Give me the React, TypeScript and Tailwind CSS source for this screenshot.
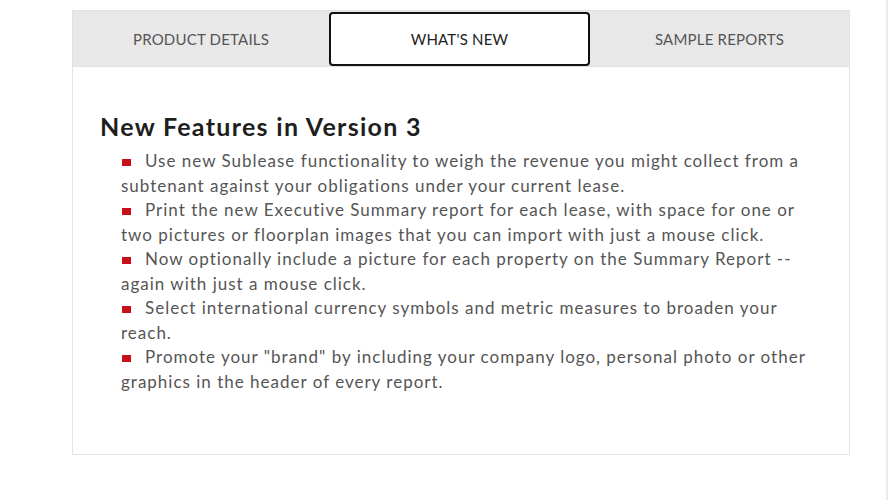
import React from "react";

const items = [
  "Use new Sublease functionality to weigh the revenue you might collect from a subtenant against your obligations under your current lease.",
  "Print the new Executive Summary report for each lease, with space for one or two pictures or floorplan images that you can import with just a mouse click.",
  "Now optionally include a picture for each property on the Summary Report -- again with just a mouse click.",
  "Select international currency symbols and metric measures to broaden your reach.",
  'Promote your "brand" by including your company logo, personal photo or other graphics in the header of every report.',
];

export default function App() {
  return (
    <div
      className="relative w-[890px] h-[500px] bg-white overflow-hidden"
      style={{ fontFamily: "Lato, 'Open Sans', sans-serif" }}
    >
      <div className="absolute right-[2px] top-0 h-full w-[2px] bg-[#ebebeb]" />
      <div className="ml-[72px] mt-[10px] w-[778px] h-[445px] border border-[#e2e2e2] bg-white">
        <div className="flex h-[56px] bg-[#e8e8e8] border-b border-[#e2e2e2]">
          <div className="w-[256px] pt-[1px] flex items-center justify-center text-[15px] text-[#555] tracking-[0.2px]">
            PRODUCT DETAILS
          </div>
          <div className="w-[261px] mt-[1px] flex items-center justify-center bg-white border-2 border-[#111] rounded-[4px] text-[15px] text-[#222] tracking-[0.2px]">
            WHAT'S NEW
          </div>
          <div className="flex-1 pt-[1px] flex items-center justify-center text-[15px] text-[#555] tracking-[0.2px]">
            SAMPLE REPORTS
          </div>
        </div>
        <div className="pl-[27px] pt-[44px]">
          <h2 className="text-[25px] font-bold text-[#1e1e1e] leading-[30px] tracking-[1.3px]">
            New Features in Version 3
          </h2>
          <ul className="mt-[8px] ml-[21px] w-[702px] text-[17px] leading-[24.5px] text-[#555] tracking-[1px]">
            {items.map((t, i) => (
              <li key={i}>
                <span className="inline-block w-[9px] h-[7px] bg-[#c8101b] ml-[1px] mr-[14px] align-[1px]" />
                {t}
              </li>
            ))}
          </ul>
        </div>
      </div>
    </div>
  );
}
